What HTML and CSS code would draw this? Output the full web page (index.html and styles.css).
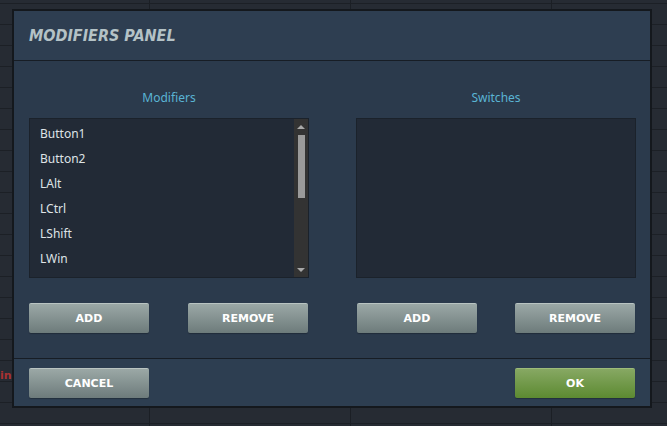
FILE: index.html
```html
<!DOCTYPE html>
<html lang="en">
<head>
    <meta charset="UTF-8">
    <meta name="viewport" content="width=device-width, initial-scale=1.0">
    <title>Modifiers Panel</title>
    <link rel="stylesheet" href="styles.css">
</head>
<body>
    <div class="backdrop">
        <span class="backdrop-text">in</span>
    </div>

    <div class="dialog">
        <div class="dialog-header">
            <h1>MODIFIERS PANEL</h1>
        </div>

        <div class="dialog-body">
            <div class="column">
                <div class="column-label">Modifiers</div>
                <div class="list-box">
                    <ul class="list-items">
                        <li>Button1</li>
                        <li>Button2</li>
                        <li>LAlt</li>
                        <li>LCtrl</li>
                        <li>LShift</li>
                        <li>LWin</li>
                    </ul>
                    <div class="scrollbar">
                        <span class="scroll-arrow up"></span>
                        <span class="scroll-thumb"></span>
                        <span class="scroll-arrow down"></span>
                    </div>
                </div>
                <div class="button-row">
                    <button class="btn">ADD</button>
                    <button class="btn">REMOVE</button>
                </div>
            </div>

            <div class="column">
                <div class="column-label">Switches</div>
                <div class="list-box"></div>
                <div class="button-row">
                    <button class="btn">ADD</button>
                    <button class="btn">REMOVE</button>
                </div>
            </div>
        </div>

        <div class="dialog-footer">
            <button class="btn">CANCEL</button>
            <button class="btn btn-ok">OK</button>
        </div>
    </div>
</body>
</html>
```

FILE: styles.css
```css
* {
    margin: 0;
    padding: 0;
    box-sizing: border-box;
}

body {
    width: 667px;
    height: 426px;
    overflow: hidden;
    font-family: 'Noto Sans', 'DejaVu Sans', sans-serif;
    background-color: #262b33;
    position: relative;
}

/* Table grid behind the modal */
.backdrop {
    height: 100%;
    background-image:
        linear-gradient(90deg, transparent 149px, #1b1f25 149px, #1b1f25 150px, transparent 150px,
                        transparent 350px, #1b1f25 350px, #1b1f25 351px, transparent 351px,
                        transparent 551px, #1b1f25 551px, #1b1f25 552px, transparent 552px),
        repeating-linear-gradient(180deg, transparent 0, transparent 3px, #1c2026 3px, #1c2026 4px, transparent 4px, transparent 21px);
}

.backdrop-text {
    position: absolute;
    left: 0;
    top: 369px;
    color: #a83232;
    font-family: 'DejaVu Sans', sans-serif;
    font-weight: bold;
    font-size: 11px;
}

/* Modal */
.dialog {
    position: absolute;
    left: 12px;
    top: 9px;
    width: 640px;
    height: 399px;
    border: 2px solid #14181d;
    background: #2a394b;
    display: flex;
    flex-direction: column;
}

.dialog-header {
    height: 50px;
    display: flex;
    align-items: center;
    padding-left: 15px;
    background: #2e3e51;
    border-bottom: 1px solid #171d25;
}

.dialog-header h1 {
    font-family: 'DejaVu Sans', sans-serif;
    font-stretch: condensed;
    font-size: 16px;
    font-weight: bold;
    font-style: italic;
    color: #b4c2c6;
}

.dialog-body {
    flex: 1;
    display: flex;
    gap: 47px;
    padding: 29px 14px 24px 15px;
    background: #2b3a4c;
}

.column {
    flex: 1;
    display: flex;
    flex-direction: column;
}

.column-label {
    height: 16px;
    line-height: 16px;
    text-align: center;
    font-size: 12px;
    color: #5ab4d4;
    margin-bottom: 12px;
}

.list-box {
    height: 160px;
    background: #222a36;
    border: 1px solid #1b222b;
    display: flex;
}

.list-items {
    flex: 1;
    list-style: none;
    padding-top: 2px;
}

.list-items li {
    height: 25px;
    line-height: 25px;
    padding-left: 10px;
    font-size: 12px;
    color: #dfe3e6;
}

.scrollbar {
    width: 14px;
    background: #333333;
    display: flex;
    flex-direction: column;
    align-items: center;
    padding: 6px 0 5px;
}

.scroll-arrow {
    width: 0;
    height: 0;
    border-left: 4px solid transparent;
    border-right: 4px solid transparent;
}

.scroll-arrow.up {
    border-bottom: 4px solid #a8a8a8;
}

.scroll-arrow.down {
    border-top: 4px solid #a8a8a8;
    margin-top: auto;
}

.scroll-thumb {
    width: 7px;
    height: 63px;
    margin-top: 6px;
    background: #9a9a9a;
}

.button-row {
    display: flex;
    justify-content: space-between;
    margin-top: 25px;
    padding-right: 1px;
}

.column + .column .button-row {
    padding-left: 1px;
}

.btn {
    width: 120px;
    height: 30px;
    border: none;
    border-radius: 2px;
    border-top: 1px solid #b9c4c2;
    background: linear-gradient(180deg, #9ba8a6 0%, #6d7b7b 100%);
    color: #ffffff;
    font-family: 'DejaVu Sans', sans-serif;
    font-weight: bold;
    font-size: 11px;
    box-shadow: 0 1px 1px rgba(0, 0, 0, 0.25);
}

.dialog-footer {
    height: 48px;
    display: flex;
    justify-content: space-between;
    padding: 9px 15px 0 15px;
    background: #2d3e51;
    border-top: 1px solid #171d25;
}

.btn-ok {
    border-top: 1px solid #9dbb7a;
    background: linear-gradient(180deg, #87a863 0%, #5c8a31 100%);
}
```
